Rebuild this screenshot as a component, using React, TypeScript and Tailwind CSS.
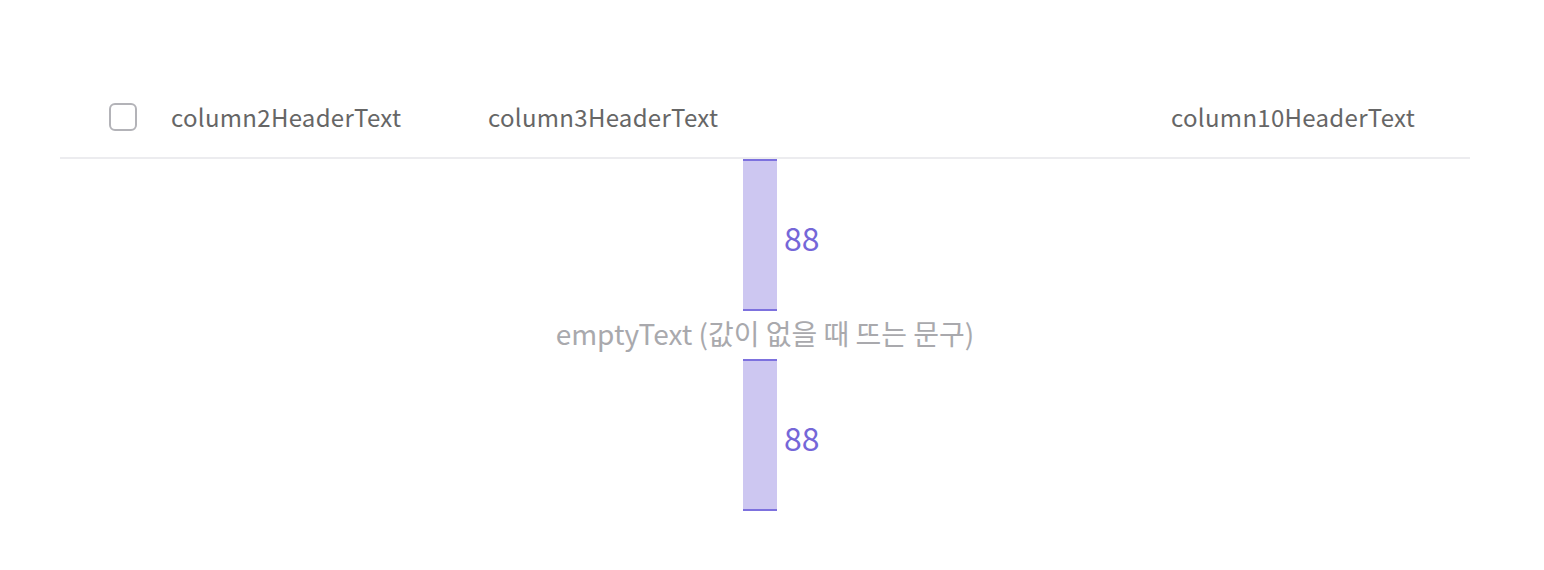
import React from 'react';

const font = { fontFamily: '"Noto Sans CJK KR", "Noto Sans", sans-serif' };

const Spacer = ({ label }: { label: string }) => (
    <div className="flex items-center">
        <div className="w-[34px] h-[152px] bg-[#cdc7f1] border-y-2 border-[#7d71de]" />
        <span className="ml-[7px] mt-[4px] w-[3px] overflow-visible text-[32px] leading-none text-[#7567d8] whitespace-nowrap">
            {label}
        </span>
    </div>
);

const App = () => {
    return (
        <div className="w-[1544px] h-[570px] bg-white pt-[79px] px-[60px]" style={font}>
            <div className="w-[1410px]">
                <div className="flex items-center h-[80px] pb-[2px] border-b-2 border-[#ececef] text-[24px] tracking-[0.3px] text-[#666666]">
                    <div className="w-[111px] pl-[49px] flex items-center">
                        <span className="block w-[28px] h-[28px] rounded-[6px] border-2 border-[#b3b3b8] bg-white" />
                    </div>
                    <div className="w-[317px] whitespace-nowrap">column2HeaderText</div>
                    <div className="flex-1 whitespace-nowrap">column3HeaderText</div>
                    <div className="pr-[55px] whitespace-nowrap">column10HeaderText</div>
                </div>
                <div className="flex flex-col items-center">
                    <Spacer label="88" />
                    <div className="h-[48px] pb-[4px] flex items-center text-[28px] text-[#a9a9ad] whitespace-nowrap">
                        emptyText (값이 없을 때 뜨는 문구)
                    </div>
                    <Spacer label="88" />
                </div>
            </div>
        </div>
    );
};

export default App;
